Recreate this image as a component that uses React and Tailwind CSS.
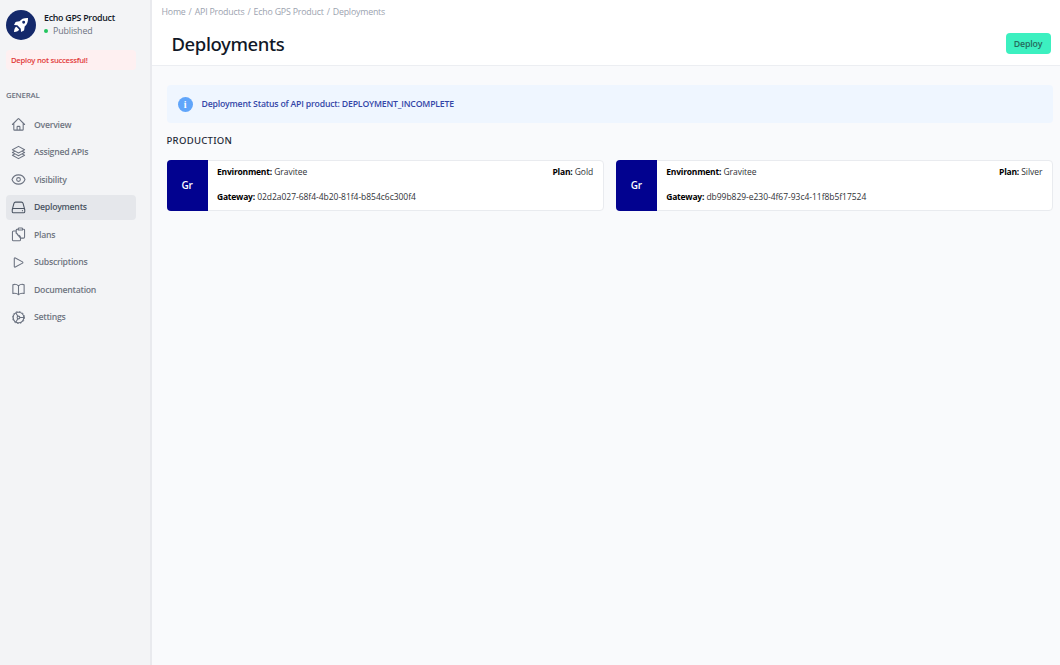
import React from "react";
import {
  HiOutlineHome,
  HiOutlineSquare3Stack3D,
  HiOutlinePlay,
  HiOutlineBookOpen,
} from "react-icons/hi2";

function Glyph({ className, children }) {
  return (
    <svg
      viewBox="0 0 24 24"
      className={className}
      fill="none"
      stroke="currentColor"
      strokeWidth="1.7"
      strokeLinecap="round"
      strokeLinejoin="round"
    >
      {children}
    </svg>
  );
}

function EyeIcon({ className }) {
  return (
    <Glyph className={className}>
      <path d="M1.6 12C3.3 7.6 7.3 4.6 12 4.6S20.7 7.6 22.4 12C20.7 16.4 16.7 19.4 12 19.4S3.3 16.4 1.6 12Z" />
      <circle cx="12" cy="12" r="3" />
    </Glyph>
  );
}

function DriveIcon({ className }) {
  return (
    <Glyph className={className}>
      <path d="M2.2 14.5 4.7 5.3A2.6 2.6 0 0 1 7.2 3.4H16.8A2.6 2.6 0 0 1 19.3 5.3L21.8 14.5" />
      <rect x="2" y="13.6" width="20" height="6.8" rx="1.8" />
      <path d="M18.2 17h.1" />
    </Glyph>
  );
}

function ClipboardsIcon({ className }) {
  return (
    <Glyph className={className}>
      <path d="M8.3 6.5H4A1.7 1.7 0 0 0 2.3 8.2V20.3A1.7 1.7 0 0 0 4 22H13.5A1.7 1.7 0 0 0 15.2 20.3V17.8" />
      <path d="M11.5 3.5H9.8A1.5 1.5 0 0 0 8.3 5V9.5M15.2 17.8H20A1.7 1.7 0 0 0 21.7 16.1V5.2A1.7 1.7 0 0 0 20 3.5H18.5" />
      <path d="M11.5 4.8V3A1.5 1.5 0 0 1 13 1.5H17A1.5 1.5 0 0 1 18.5 3V4.8ZM8.3 9.5C10.5 9.5 10.5 10.5 10.5 12.8 13 12.8 15.2 13.5 15.2 17.8Z" />
    </Glyph>
  );
}

function WheelIcon({ className }) {
  return (
    <Glyph className={className}>
      <circle cx="12" cy="12" r="8.5" />
      <circle cx="12" cy="12" r="9.6" strokeWidth="1.5" strokeDasharray="1.6 3.43" />
      <circle cx="12" cy="12" r="2.2" />
      <path d="M14.2 12H20.5M10.9 10.1 7.9 4.8M10.9 13.9 7.9 19.2" />
    </Glyph>
  );
}

function RocketIcon({ className }) {
  return (
    <svg viewBox="0 0 24 24" className={className} fill="currentColor">
      <path
        fillRule="evenodd"
        d="M22.5 1.5C16.5 1.2 12.5 3 9.8 6.5L5 7.2C4.3 7.3 3.7 7.7 3.4 8.3L1.5 12 6.5 12.3 11.7 17.5 12 22.5 15.7 20.6C16.3 20.3 16.7 19.7 16.8 19L17.5 14.2C21 11.5 22.8 7.5 22.5 1.5ZM16 5.8A2.2 2.2 0 1 1 16 10.2 2.2 2.2 0 0 1 16 5.8Z"
      />
      <path d="M5.2 14.8C3 15.5 1.7 18.3 1.5 22.5 5.7 22.3 8.5 21 9.2 18.8Z" />
    </svg>
  );
}

const NAV = [
  { label: "Overview", icon: HiOutlineHome },
  { label: "Assigned APIs", icon: HiOutlineSquare3Stack3D },
  { label: "Visibility", icon: EyeIcon },
  { label: "Deployments", icon: DriveIcon, active: true },
  { label: "Plans", icon: ClipboardsIcon },
  { label: "Subscriptions", icon: HiOutlinePlay },
  { label: "Documentation", icon: HiOutlineBookOpen },
  { label: "Settings", icon: WheelIcon },
];

const CRUMBS = ["Home", "API Products", "Echo GPS Product", "Deployments"];

const DEPLOYMENTS = [
  { environment: "Gravitee", plan: "Gold", gateway: "02d2a027-68f4-4b20-81f4-b854c6c300f4" },
  { environment: "Gravitee", plan: "Silver", gateway: "db99b829-e230-4f67-93c4-11f8b5f17524" },
];

function Sidebar() {
  return (
    <aside className="flex w-[152px] shrink-0 flex-col border-r-2 border-[#e9eaee] bg-[#f3f4f6] pt-2.5 pr-[14px] pl-1.5">
      <div className="flex h-[30px] items-center gap-2">
        <div className="flex size-[30px] items-center justify-center rounded-full bg-[#14296b] text-white">
          <RocketIcon className="size-4" />
        </div>
        <div className="whitespace-nowrap">
          <div className="text-[8.8px] leading-3 font-semibold tracking-[-0.25px] text-[#111827]">Echo GPS Product</div>
          <div className="flex items-center gap-[5px] text-[8.8px] leading-[13px] font-medium tracking-[-0.1px] text-[#6b7280]">
            <span className="size-1 rounded-full bg-[#22c55e]" />
            <span className="pt-px">Published</span>
          </div>
        </div>
      </div>
      <div className="mt-2.5 flex h-5 items-center rounded bg-[#fef0f1] px-[5px] pt-[1.5px] text-[7.7px] font-semibold tracking-[-0.27px] whitespace-nowrap text-[#e23a3a]">
        Deploy not successful!
      </div>
      <div className="mt-[19px] text-[7.8px] leading-[13px] font-semibold tracking-[-0.2px] text-[#6b7280]">GENERAL</div>
      <nav className="mt-[10px] flex flex-col gap-[2.5px]">
        {NAV.map(({ label, icon: Icon, active }) => (
          <a
            key={label}
            className={`flex h-[25px] items-center gap-[8px] rounded-[4px] pl-[5px] text-[8.7px] font-semibold tracking-[-0.26px] ${
              active ? "bg-[#e5e7eb] text-[#4b5563]" : "text-[#6f7581]"
            }`}
          >
            <Icon className={`size-[15px] ${active ? "text-[#4b5563]" : "text-[#6b7280]"}`} strokeWidth={1.7} />
            <span className="pt-[2px]">{label}</span>
          </a>
        ))}
      </nav>
    </aside>
  );
}

function Field({ name, value }) {
  return (
    <div>
      <span className="font-bold tracking-[-0.22px] text-black">{name}:</span>{" "}
      <span className="tracking-[-0.03px]">{value}</span>
    </div>
  );
}

function DeploymentCard({ environment, plan, gateway }) {
  return (
    <div className="flex h-[51px] rounded border border-[#e9ebef] bg-white">
      <div className="-my-px -ml-px flex w-[41px] shrink-0 items-center justify-center rounded-l bg-[#02028f] text-[10px] font-semibold tracking-[-0.3px] text-white">
        Gr
      </div>
      <div className="flex flex-1 flex-col gap-3 pt-[4px] pr-[9.5px] pl-[9.5px] text-[8.5px] leading-[13px] text-[#2f3237]">
        <div className="flex justify-between">
          <Field name="Environment" value={environment} />
          <Field name="Plan" value={plan} />
        </div>
        <Field name="Gateway" value={gateway} />
      </div>
    </div>
  );
}

export default function App() {
  return (
    <div className="flex h-[665px] w-[1060px] overflow-hidden bg-[#f9fafc] font-['Open_Sans','Noto_Sans',sans-serif]">
      <Sidebar />
      <main className="flex min-w-0 flex-1 flex-col">
        <header className="h-[66px] border-b border-[#eceef2] bg-white px-[9.5px]">
          <div className="flex gap-[3px] pt-[6px] text-[8.8px] leading-[13px] tracking-[-0.19px] text-[#9ca3af]">
            {CRUMBS.map((crumb, i) => (
              <React.Fragment key={crumb}>
                {i > 0 && <span>/</span>}
                <span>{crumb}</span>
              </React.Fragment>
            ))}
          </div>
          <div className="mt-[13px] flex h-6 items-center justify-between pl-2.5">
            <h1 className="font-['Noto_Sans',sans-serif] text-[18.5px] leading-6 font-medium tracking-[-0.4px] text-[#111827]">
              Deployments
            </h1>
            <button className="mb-px flex h-[21px] w-[45px] items-center justify-center rounded bg-[#3cf0c0] pt-[2px] text-[8.8px] font-semibold tracking-[-0.15px] text-[#256b5c]">
              Deploy
            </button>
          </div>
        </header>
        <section className="pt-[19px] pr-[7px] pl-[14.5px]">
          <div className="flex h-[38px] items-center gap-[9px] rounded bg-[#eff6ff] pl-[11px] text-[8.7px] font-semibold tracking-[-0.19px] text-[#3446a8]">
            <span className="flex size-[15px] items-center justify-center rounded-full bg-[#60a5fa] font-['Liberation_Serif',serif] text-[10px] text-white">
              i
            </span>
            <span className="pt-[1.5px]">Deployment Status of API product: DEPLOYMENT_INCOMPLETE</span>
          </div>
          <h2 className="mt-[11px] font-['Noto_Sans',sans-serif] text-[9.5px] leading-[14px] font-medium tracking-[0.3px] text-[#1f2937]">
            PRODUCTION
          </h2>
          <div className="mt-3 grid grid-cols-2 gap-3">
            {DEPLOYMENTS.map((d) => (
              <DeploymentCard key={d.gateway} {...d} />
            ))}
          </div>
        </section>
      </main>
    </div>
  );
}
